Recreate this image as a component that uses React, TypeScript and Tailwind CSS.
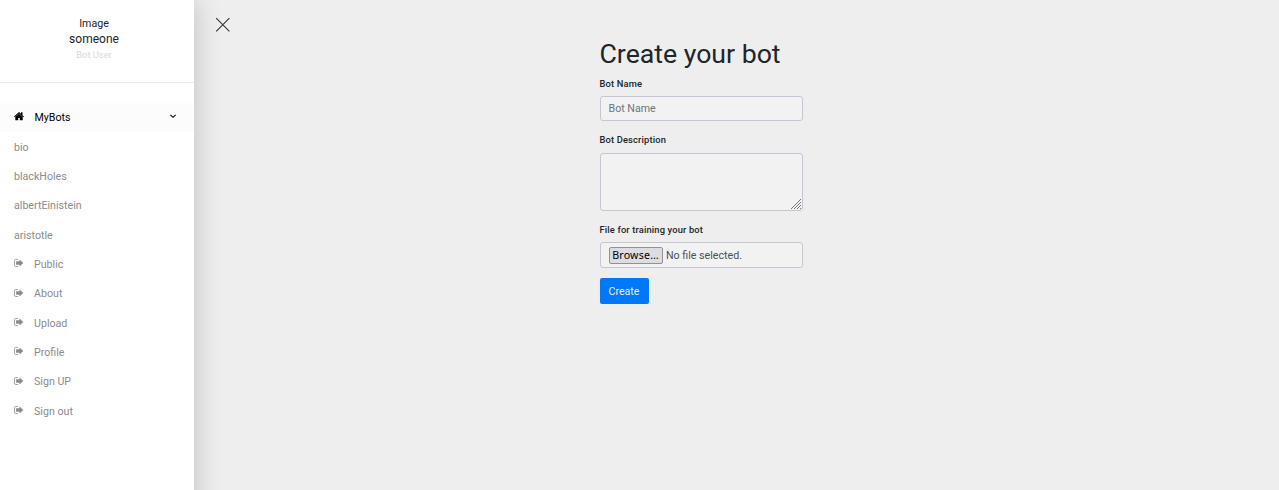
import React from 'react';

function HomeIcon() {
  return (
    <svg className="block h-[9px] w-[10px]" viewBox="0 0 10 9" fill="currentColor">
      <path d="M5 0 0 4.5l.8.7L5 1.5l4.2 3.7.8-.7-1.5-1.35V.3H7v1.5L5 0Z" />
      <path d="M1.3 5 5 1.7 8.7 5v3.2H5.8V6H4.2v2.2H1.3V5Z" />
    </svg>
  );
}

function LeaveIcon() {
  return (
    <svg className="block h-[9px] w-[10px]" viewBox="0 0 10 9" fill="none">
      <path d="M4 .5H1.7Q.5.5.5 1.7v4.6q0 1.2 1.2 1.2H4" stroke="currentColor" strokeWidth="0.8" />
      <path d="M2.1 2.3h3.4V.5L9.3 4 5.5 7.5V5.8H2.1V2.3Z" fill="currentColor" />
    </svg>
  );
}

const bots = ['bio', 'blackHoles', 'albertEinistein', 'aristotle'];
const links = ['Public', 'About', 'Upload', 'Profile', 'Sign UP', 'Sign out'];

function Sidebar() {
  return (
    <aside className="h-[600px] w-[194px] shrink-0 bg-white shadow-[0_0_27px_rgba(0,0,0,0.2)]">
      <header className="flex h-[83px] flex-col items-center border-b border-[#e9e9e9] pr-[6px] pt-4 text-[#212529]">
        <div className="h-[15px] text-[10.67px] leading-4">Image</div>
        <div className="h-4 text-[12px] leading-4">someone</div>
        <div className="h-4 text-[9.33px] leading-4 text-[#dadada]">Bot User</div>
      </header>
      <nav className="pt-5 text-[10.67px] text-[#8b8b8b]">
        <a className="flex h-[29px] items-center bg-[#fcfcfc] pl-[14px] pr-[17px] text-black">
          <span className="mr-[10.5px] -translate-y-px"><HomeIcon /></span>
          <span className="grow">MyBots</span>
          <svg className="block h-[5px] w-[8px] -translate-y-px" viewBox="0 0 8 5" fill="none">
            <path d="m1.4 .8 2.6 2.5L6.6.8" stroke="currentColor" strokeWidth="1.1" />
          </svg>
        </a>
        <div className="pt-[1px]">
          {bots.map((bot) => (
            <a key={bot} className="flex h-[29.33px] items-center pl-[14px]">{bot}</a>
          ))}
          {links.map((link) => (
            <a key={link} className="flex h-[29.33px] items-center pl-[14px]">
              <span className="mr-[10px] -translate-y-px"><LeaveIcon /></span>
              {link}
            </a>
          ))}
        </div>
      </nav>
    </aside>
  );
}

const field = 'block w-full rounded-[3px] border border-[#c3c7cf] bg-[#f2f2f2]';
const label = 'block h-4 -ml-[0.5px] whitespace-nowrap text-[9.33px] font-medium leading-4 tracking-[0.15px] text-[#212529]';

export default function App() {
  return (
    <div className="flex h-[490px] w-full overflow-hidden bg-[#eeeeee] font-['Roboto',sans-serif]">
      <Sidebar />
      <main className="flex grow">
        <button className="ml-[21px] mt-[17px] h-[15px] w-[15px]" aria-label="Close menu">
          <svg className="block h-[15px] w-[15px]" viewBox="0 0 15 15" fill="none">
            <path d="m1.2 1.2 13.2 13.2M14.4 1.2 1.2 14.4" stroke="#333" strokeWidth="1.1" />
          </svg>
        </button>
        <form className="ml-[370px] w-[203px] pt-[38px]" onSubmit={(e) => e.preventDefault()}>
          <h1 className="-ml-[0.5px] h-8 whitespace-nowrap text-[26.67px] leading-8 text-[#212529]">Create your bot</h1>
          <label className={`${label} mt-[6px]`}>Bot Name</label>
          <input className={`${field} mt-1 h-[25px] px-[7.5px] text-[10.67px] placeholder:text-[#6c757d]`} placeholder="Bot Name" />
          <label className={`${label} mt-[11px]`}>Bot Description</label>
          <div className={`${field} mt-[5px] flex h-[58px] items-end justify-end p-px`}>
            <svg className="block h-[10px] w-[10px]" viewBox="0 0 10 10" stroke="#777" strokeWidth="1">
              <path d="M0 10 10 0M3 10l7-7M6 10l4-4M9 10l1-1" />
            </svg>
          </div>
          <label className={`${label} mt-[11px]`}>File for training your bot</label>
          <div className={`${field} mt-1 flex h-[26px] items-center pl-2 text-[10.67px] text-[#495057]`}>
            <button type="button" className="mr-[3px] flex h-[17px] w-[54px] items-center justify-center rounded-[2px] border border-[#8f8f9d] bg-[#dddde1] pr-px font-['Noto_Sans',sans-serif] text-[10.67px] tracking-[0.18px] text-black">Browse…</button>
            <span className="pt-px">No file selected.</span>
          </div>
          <button className="mt-[10px] flex h-[26px] w-[49px] items-center justify-center rounded-[2px] bg-[#0078f7] pr-px pt-px text-[10.67px] text-[#eeeeee]">Create</button>
        </form>
      </main>
    </div>
  );
}
